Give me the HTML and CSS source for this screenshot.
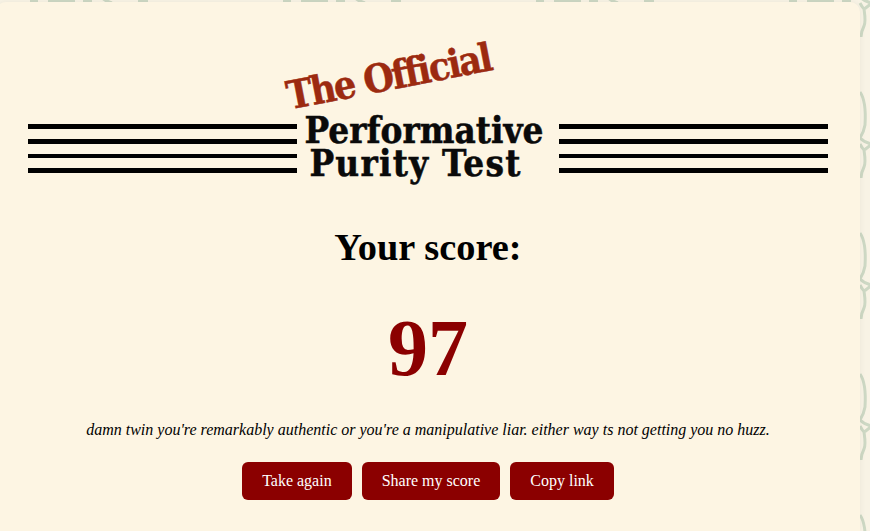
FILE: index.html
```html
<!DOCTYPE html>
<html lang="en">
<head>
  <meta charset="UTF-8">
  <meta name="viewport" content="width=device-width, initial-scale=1">
  <title>The Official Performative Purity Test</title>
  <link rel="stylesheet" href="styles.css">
</head>
<body>
  <main class="card">
    <div class="logo">
      <div class="rules"><span></span><span></span><span></span><span></span></div>
      <div class="logo-text">
        <span class="logo-tag">The Official</span>
        <span class="logo-line">Performative</span>
        <span class="logo-line logo-line-second">Purity Test</span>
      </div>
      <div class="rules"><span></span><span></span><span></span><span></span></div>
    </div>

    <h2 class="score-title">Your score:</h2>
    <div class="score">97</div>
    <p class="verdict">damn twin you're remarkably authentic or you're a manipulative liar. either way ts not getting you no huzz.</p>

    <div class="actions">
      <button>Take again</button>
      <button>Share my score</button>
      <button>Copy link</button>
    </div>
  </main>
</body>
</html>
```

FILE: styles.css
```css
html, body {
  height: 100%;
}

body {
  margin: 0;
  overflow: hidden;
  font-family: "Liberation Serif", serif;
  background-color: #f8f3e5;
  background-image: url("data:image/svg+xml,%3Csvg xmlns='http://www.w3.org/2000/svg' width='253' height='141'%3E%3Cg fill='none' stroke='%23cdd8c4' stroke-width='3'%3E%3Cpath d='M101 1C106 8 107 18 106 34C105 40 103 44 101 47C104 50 108 52 112 53M112 54C109 56 107 58 105 59C103 57 102 55 101 53M105 59C106 66 107 72 105 76C103 80 102 83 102 87'/%3E%3C/g%3E%3Cg fill='%23cdd8c4'%3E%3Crect x='30' y='50' width='8' height='2'/%3E%3Crect x='48' y='50' width='27' height='2'/%3E%3Crect x='83' y='50' width='9' height='2'/%3E%3Crect x='138' y='50' width='10' height='2'/%3E%3C/g%3E%3C/svg%3E");
  background-position: 0 -50px;
}

/* card runs a little past the left edge of the window */
.card {
  box-sizing: border-box;
  width: 864px;
  height: 529px;
  margin: 2px 0 0 -4px;
  padding: 38px 32px 0;
  background: #fdf5e3;
  border-radius: 10px 10px 0 0;
  box-shadow: 0 0 6px rgba(0, 0, 0, 0.06);
  text-align: center;
}

/* logo */
.logo {
  display: flex;
  align-items: flex-end;
  justify-content: space-between;
  height: 143px;
}
.rules {
  display: flex;
  flex-direction: column;
  gap: 10px;
  width: 269px;
  margin-bottom: 10px;
}
.rules span {
  display: block;
  height: 4.7px;
  background: #000;
}
.logo-text {
  position: relative;
  display: flex;
  flex-direction: column;
  align-items: center;
  margin: 0 8px 3px 0;
  font-family: "DejaVu Serif", serif;
  font-stretch: condensed;
  font-weight: bold;
  color: #0a0a0a;
  -webkit-text-stroke: 0.5px #0a0a0a;
}
.logo-line {
  font-size: 36.5px;
  line-height: 33px;
}
.logo-line-second {
  margin-left: -17px;
  letter-spacing: 1.2px;
}
.logo-tag {
  position: absolute;
  left: -20px;
  top: -61px;
  font-size: 39px;
  white-space: nowrap;
  letter-spacing: -2px;
  color: #9c2a10;
  -webkit-text-stroke: 0.5px #9c2a10;
  transform: rotate(-11deg);
}

/* score */
.score-title {
  margin: 42px 0 0;
  font-size: 38.4px;
  line-height: 44px;
  color: #000;
}
.score {
  margin-top: 33px;
  font-size: 80px;
  font-weight: bold;
  line-height: 92px;
  color: #8b0000;
}
.verdict {
  margin: 27px 0 0;
  font-size: 16px;
  font-style: italic;
  line-height: 18px;
  color: #000;
}

.actions {
  display: flex;
  justify-content: center;
  gap: 10px;
  margin-top: 23px;
}
button {
  height: 38px;
  padding: 0 20px;
  font-family: inherit;
  font-size: 16px;
  color: #fff;
  background: #8b0000;
  border: none;
  border-radius: 6px;
  cursor: pointer;
}
```
